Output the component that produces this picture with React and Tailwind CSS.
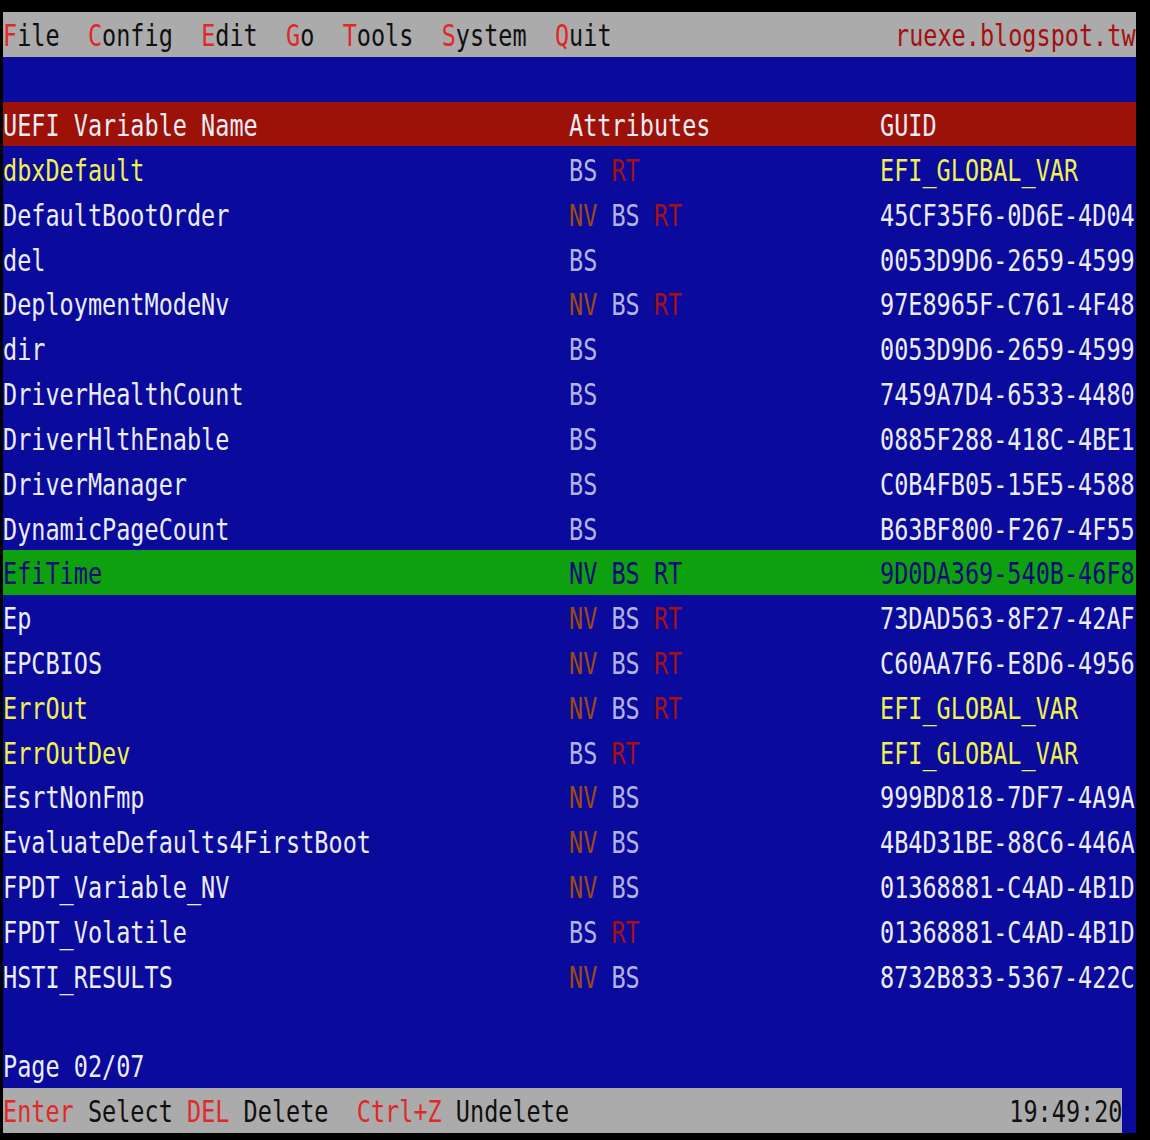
import React from 'react';

// text-mode screen: 80 columns of ~14.15px, rows of ~44.84px
const rows = [
  { name: 'dbxDefault', attrs: ['BS', 'RT'], guid: 'EFI_GLOBAL_VAR', yellow: true },
  { name: 'DefaultBootOrder', attrs: ['NV', 'BS', 'RT'], guid: '45CF35F6-0D6E-4D04' },
  { name: 'del', attrs: ['BS'], guid: '0053D9D6-2659-4599' },
  { name: 'DeploymentModeNv', attrs: ['NV', 'BS', 'RT'], guid: '97E8965F-C761-4F48' },
  { name: 'dir', attrs: ['BS'], guid: '0053D9D6-2659-4599' },
  { name: 'DriverHealthCount', attrs: ['BS'], guid: '7459A7D4-6533-4480' },
  { name: 'DriverHlthEnable', attrs: ['BS'], guid: '0885F288-418C-4BE1' },
  { name: 'DriverManager', attrs: ['BS'], guid: 'C0B4FB05-15E5-4588' },
  { name: 'DynamicPageCount', attrs: ['BS'], guid: 'B63BF800-F267-4F55' },
  { name: 'EfiTime', attrs: ['NV', 'BS', 'RT'], guid: '9D0DA369-540B-46F8', selected: true },
  { name: 'Ep', attrs: ['NV', 'BS', 'RT'], guid: '73DAD563-8F27-42AF' },
  { name: 'EPCBIOS', attrs: ['NV', 'BS', 'RT'], guid: 'C60AA7F6-E8D6-4956' },
  { name: 'ErrOut', attrs: ['NV', 'BS', 'RT'], guid: 'EFI_GLOBAL_VAR', yellow: true },
  { name: 'ErrOutDev', attrs: ['BS', 'RT'], guid: 'EFI_GLOBAL_VAR', yellow: true },
  { name: 'EsrtNonFmp', attrs: ['NV', 'BS'], guid: '999BD818-7DF7-4A9A' },
  { name: 'EvaluateDefaults4FirstBoot', attrs: ['NV', 'BS'], guid: '4B4D31BE-88C6-446A' },
  { name: 'FPDT_Variable_NV', attrs: ['NV', 'BS'], guid: '01368881-C4AD-4B1D' },
  { name: 'FPDT_Volatile', attrs: ['BS', 'RT'], guid: '01368881-C4AD-4B1D' },
  { name: 'HSTI_RESULTS', attrs: ['NV', 'BS'], guid: '8732B833-5367-422C' },
];

const attrColor = {
  NV: 'text-[#9a4a14]',
  BS: 'text-[#b4b4e4]',
  RT: 'text-[#a81010]',
};

// squeezes the mono glyphs into the tall, narrow console cell
const T = ({ children, className = '', right = false }) => (
  <span
    className={`inline-block whitespace-pre ${right ? 'origin-right' : 'origin-left'} scale-x-[0.7835] ${className}`}
  >
    {children}
  </span>
);

const Row = ({ className = '', children }) => (
  <div className={`h-[44.84px] shrink-0 flex items-center overflow-hidden pt-[4px] ${className}`}>
    {children}
  </div>
);

const Hot = ({ k, rest }) => (
  <>
    <span className="text-[#e02828]">{k}</span>
    <span className="text-[#101010]">{rest}</span>
  </>
);

const App = () => {
  return (
    <div
      className="w-[1150px] h-[1140px] bg-black pt-[12px] pl-[3px] text-[30px] leading-none"
      style={{ fontFamily: '"DejaVu Sans Mono", "Liberation Mono", monospace' }}
    >
      <div className="w-[1133px] h-[1121px] bg-[#0a0a9c] overflow-hidden flex flex-col text-[#ececf4]">
        {/* menu bar */}
        <Row className="bg-[#ababab] justify-between">
          <T>
            <Hot k="F" rest="ile  " />
            <Hot k="C" rest="onfig  " />
            <Hot k="E" rest="dit  " />
            <Hot k="G" rest="o  " />
            <Hot k="T" rest="ools  " />
            <Hot k="S" rest="ystem  " />
            <Hot k="Q" rest="uit" />
          </T>
          <div className="w-[241px] shrink-0 overflow-visible">
            <T className="text-[#a41010]">ruexe.blogspot.tw</T>
          </div>
        </Row>

        <Row />

        {/* column header */}
        <Row className="bg-[#9c1208]">
          <div className="w-[566px] shrink-0"><T>UEFI Variable Name</T></div>
          <div className="w-[311px] shrink-0"><T>Attributes</T></div>
          <div className="flex-1"><T>GUID</T></div>
        </Row>

        {rows.map((r) => (
          <Row key={r.name} className={r.selected ? 'bg-[#0ea00e] text-[#0a0a7a]' : ''}>
            <div className="w-[566px] shrink-0">
              <T className={!r.selected && r.yellow ? 'text-[#f0f050]' : ''}>{r.name}</T>
            </div>
            <div className="w-[311px] shrink-0">
              <T>
                {r.attrs.map((a, i) => (
                  <span key={a} className={r.selected ? '' : attrColor[a]}>
                    {i > 0 ? ' ' : ''}
                    {a}
                  </span>
                ))}
              </T>
            </div>
            <div className="flex-1 min-w-0">
              <T className={!r.selected && r.yellow ? 'text-[#f0f050]' : ''}>{r.guid}</T>
            </div>
          </Row>
        ))}

        <Row />

        <Row>
          <T>Page 02/07</T>
        </Row>

        {/* key help bar */}
        <Row className="bg-[#ababab] w-[1119px] justify-between">
          <T>
            <Hot k="Enter" rest=" Select " />
            <Hot k="DEL" rest=" Delete  " />
            <Hot k="Ctrl+Z" rest=" Undelete" />
          </T>
          <T right className="text-[#101010]">19:49:20</T>
        </Row>
      </div>
    </div>
  );
};

export default App;
